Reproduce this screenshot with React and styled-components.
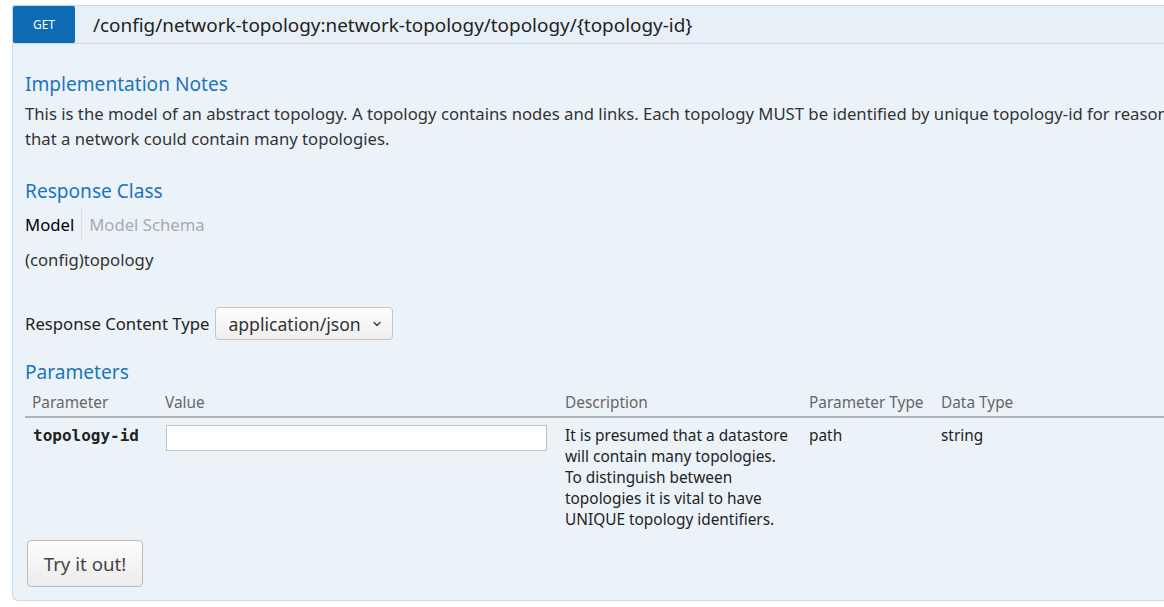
import React from 'react';
import styled, { createGlobalStyle } from 'styled-components';

const Global = createGlobalStyle`
  html, body {
    margin: 0;
    padding: 0;
    background: #fff;
    overflow: hidden;
  }
  body {
    font-family: 'Noto Sans', 'Open Sans', sans-serif;
    color: #333;
  }
`;

const Page = styled.div`
  padding: 5px 0 0 12px;
  width: 1300px;
`;

const Heading = styled.div`
  display: flex;
  align-items: center;
  background: #e7f0f7;
  border: 1px solid #c3d9ec;
  border-radius: 2px 2px 0 0;
  height: 37px;
`;

const Method = styled.span`
  display: flex;
  align-items: center;
  justify-content: center;
  width: 62px;
  height: 37px;
  background: #0f6ab4;
  color: #fff;
  font-size: 12px;
  border-radius: 2px;
`;

const Path = styled.span`
  margin-left: 18px;
  font-size: 18.9px;
  color: #222;
`;

const Content = styled.div`
  background: #ebf3f9;
  border: 1px solid #c3d9ec;
  border-top: none;
  border-radius: 0 0 6px 6px;
  padding: 26px 12px 13px 12px;
`;

const H4 = styled.h4`
  margin: ${p => p.$top || 0}px 0 0 0;
  font-size: 19.1px;
  line-height: 28px;
  font-weight: 400;
  color: #1b74c0;
`;

const Notes = styled.p`
  margin: 3px 0 0 0;
  font-size: 16.7px;
  line-height: 25px;
  color: #333;
  white-space: nowrap;
`;

const Tabs = styled.ul`
  display: flex;
  list-style: none;
  margin: 4px 0 0 0;
  padding: 0;
`;

const Tab = styled.li`
  display: flex;
  align-items: center;
  height: 30px;
  font-size: 16.7px;
  color: ${p => (p.$active ? '#000' : '#aaa')};
  padding: ${p => (p.$active ? '0 7px 0 0' : '0 0 0 7px')};
  border-left: ${p => (p.$active ? 'none' : '1px solid #ddd')};
`;

const ModelName = styled.div`
  margin-top: 9px;
  font-size: 16.7px;
  line-height: 24px;
  color: #333;
`;

const ContentTypeRow = styled.div`
  display: flex;
  align-items: center;
  margin-top: 35px;
  font-size: 16.7px;
  color: #222;
`;

const Select = styled.div`
  display: flex;
  align-items: center;
  gap: 10px;
  margin-left: 6px;
  height: 31px;
  padding: 0 9px 0 12px;
  border: 1px solid #c4c4c4;
  border-radius: 4px;
  background: linear-gradient(#fdfdfd, #efefef);
  font-size: 17.6px;
  color: #333;
`;

const Table = styled.table`
  width: 100%;
  margin-top: 2px;
  border-collapse: collapse;
  table-layout: fixed;
`;

const Th = styled.th`
  width: ${p => (p.$w ? `${p.$w}px` : 'auto')};
  text-align: left;
  font-weight: 400;
  font-size: 15.4px;
  line-height: 20px;
  color: #666;
  padding: 5px 7px 3px 7px;
  border-bottom: 2px solid #b4b4b4;
`;

const Td = styled.td`
  vertical-align: top;
  padding: 7px 7px 0 7px;
  font-size: 15.4px;
  line-height: 21px;
  color: #222;
`;

const Code = styled.code`
  font-family: 'DejaVu Sans Mono', 'Liberation Mono', monospace;
  font-weight: 700;
  font-size: 16px;
  color: #222;
  padding-left: 1px;
`;

const Input = styled.input`
  box-sizing: border-box;
  display: block;
  width: 381px;
  height: 26px;
  margin: 0 0 0 1px;
  border: 1px solid #c2c2c2;
  background: #fff;
`;

const TryButton = styled.button`
  margin: 10px 0 0 2px;
  width: 116px;
  height: 47px;
  border: 1px solid #bbb;
  border-radius: 4px;
  background: linear-gradient(#fcfcfc, #ececec);
  font-family: 'Noto Sans', 'DejaVu Sans', sans-serif;
  font-size: 18.7px;
  color: #444;
`;

const Chevron = () => (
  <svg width="12" height="12" viewBox="0 0 24 24" fill="none" stroke="#444" strokeWidth="3" strokeLinecap="round" strokeLinejoin="round">
    <path d="m6 9 6 6 6-6" />
  </svg>
);

export default function App() {
  return (
    <Page>
      <Global />
      <Heading>
        <Method>GET</Method>
        <Path>/config/network-topology:network-topology/topology/{'{topology-id}'}</Path>
      </Heading>
      <Content>
        <H4>Implementation Notes</H4>
        <Notes>
          This is the model of an abstract topology. A topology contains nodes and links. Each topology MUST be identified by unique topology-id for reason
          <br />
          that a network could contain many topologies.
        </Notes>
        <H4 $top={26}>Response Class</H4>
        <Tabs>
          <Tab $active>Model</Tab>
          <Tab>Model Schema</Tab>
        </Tabs>
        <ModelName>(config)topology</ModelName>
        <ContentTypeRow>
          Response Content Type
          <Select>
            application/json
            <Chevron />
          </Select>
        </ContentTypeRow>
        <H4 $top={18}>Parameters</H4>
        <Table>
          <thead>
            <tr>
              <Th $w={119}>Parameter</Th>
              <Th $w={386}>Value</Th>
              <Th $w={230}>Description</Th>
              <Th $w={118}>Parameter Type</Th>
              <Th>Data Type</Th>
            </tr>
          </thead>
          <tbody>
            <tr>
              <Td><Code>topology-id</Code></Td>
              <Td><Input type="text" /></Td>
              <Td>
                It is presumed that a datastore will contain many topologies. To distinguish between topologies it is vital to have UNIQUE topology identifiers.
              </Td>
              <Td>path</Td>
              <Td>string</Td>
            </tr>
          </tbody>
        </Table>
        <TryButton>Try it out!</TryButton>
      </Content>
    </Page>
  );
}
